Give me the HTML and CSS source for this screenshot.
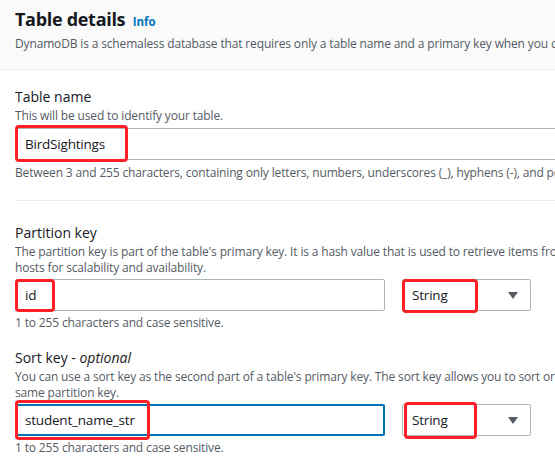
FILE: index.html
```html
<!DOCTYPE html>
<html>
<head>
<meta charset="utf-8">
<link rel="stylesheet" href="styles.css">
</head>
<body>
<div class="page">
  <header class="head">
    <h2 class="title">Table details <a class="info">Info</a></h2>
    <p class="lead">DynamoDB is a schemaless database that requires only a table name and a primary key when you create the table.</p>
  </header>
  <section class="body">
    <div class="field f-name">
      <div class="label">Table name</div>
      <div class="desc">This will be used to identify your table.</div>
      <div class="control">
        <div class="input wide"><span class="val">BirdSightings</span></div>
        <span class="mark m-name"></span>
      </div>
      <div class="hint">Between 3 and 255 characters, containing only letters, numbers, underscores (_), hyphens (-), and periods (.).</div>
    </div>
    <div class="divider"></div>
    <div class="field f-pk">
      <div class="label">Partition key</div>
      <div class="desc">The partition key is part of the table's primary key. It is a hash value that is used to retrieve items from your table and allocate data across<br>hosts for scalability and availability.</div>
      <div class="keyrow">
        <div class="control">
          <div class="input"><span class="val">id</span></div>
          <span class="mark m-id"></span>
        </div>
        <div class="control">
          <div class="select"><span class="val">String</span><span class="caret"></span></div>
          <span class="mark m-type"></span>
        </div>
      </div>
      <div class="hint">1 to 255 characters and case sensitive.</div>
    </div>
    <div class="field f-sk">
      <div class="label">Sort key - <i>optional</i></div>
      <div class="desc">You can use a sort key as the second part of a table's primary key. The sort key allows you to sort or search among all items sharing the<br>same partition key.</div>
      <div class="keyrow">
        <div class="control">
          <div class="input focus"><span class="val">student_name_str</span></div>
          <span class="mark m-sk"></span>
        </div>
        <div class="control">
          <div class="select"><span class="val">String</span><span class="caret"></span></div>
          <span class="mark m-type2"></span>
        </div>
      </div>
      <div class="hint">1 to 255 characters and case sensitive.</div>
    </div>
  </section>
</div>
</body>
</html>
```
FILE: styles.css
```css
html, body {
  margin: 0;
  padding: 0;
  background: #ffffff;
}
body {
  width: 555px;
  height: 462px;
  overflow: hidden;
  font-family: "Open Sans", "Noto Sans", sans-serif;
  color: #16191f;
}
.page {
  width: 1000px;
}
.head {
  background: #fafafa;
  border-bottom: 1px solid #eaeded;
  padding: 5px 15px 0;
  height: 64px;
}
.title {
  margin: 0;
  font-size: 18px;
  letter-spacing: -0.3px;
  line-height: 28px;
  font-weight: 700;
  color: #16191f;
}
.info {
  font-size: 11.5px;
  letter-spacing: 0;
  font-weight: 700;
  color: #0073bb;
  margin-left: 3px;
}
.lead, .desc, .hint {
  font-size: 12px;
  letter-spacing: -0.15px;
  line-height: 16px;
  color: #545b64;
  white-space: nowrap;
}
.lead {
  margin: 0;
}
.body {
  padding: 0 15px;
}
.field {
  display: flex;
  flex-direction: column;
}
.f-name { padding-top: 17px; }
.f-pk { padding-top: 22px; }
.f-sk { padding-top: 17px; }
.label {
  font-size: 14px;
  line-height: 20px;
  color: #16191f;
}
.desc {
  padding-top: 1px;
  margin-bottom: 3px;
}
.f-name .desc { margin-top: 0; margin-bottom: 4px; }
.hint {
  margin-top: 4px;
}
.f-name .hint { margin-top: 5px; }
.divider {
  height: 1px;
  background: #eaeded;
  margin-top: 19px;
}
.control {
  position: relative;
}
.keyrow {
  display: grid;
  grid-template-columns: 370px 129px;
  column-gap: 17px;
}
.input, .select {
  box-sizing: border-box;
  height: 32px;
  border: 1px solid #aab7b8;
  border-radius: 2px;
  display: flex;
  align-items: center;
  padding: 0 9px;
  font-size: 13.5px;
  letter-spacing: -0.2px;
  color: #16191f;
  background: #fff;
}
.input.focus {
  border: 2px solid #0073bb;
  padding: 0 8px;
}
.select {
  justify-content: space-between;
  padding-right: 12px;
}
.caret {
  width: 0;
  height: 0;
  border-left: 5px solid transparent;
  border-right: 5px solid transparent;
  border-top: 7px solid #545b64;
}
.mark {
  position: absolute;
  box-sizing: border-box;
  border: 3px solid #ff1f26;
  border-radius: 4px;
}
.m-name { left: 0; top: -3px; width: 113px; height: 37px; }
.m-id { left: 0; top: 0; width: 40px; height: 33px; }
.m-type { left: 0; top: 0; width: 76px; height: 34px; }
.m-sk { left: 0; top: -4px; width: 135px; height: 40px; }
.m-type2 { left: 2px; top: -2px; width: 73px; height: 37px; }
```
